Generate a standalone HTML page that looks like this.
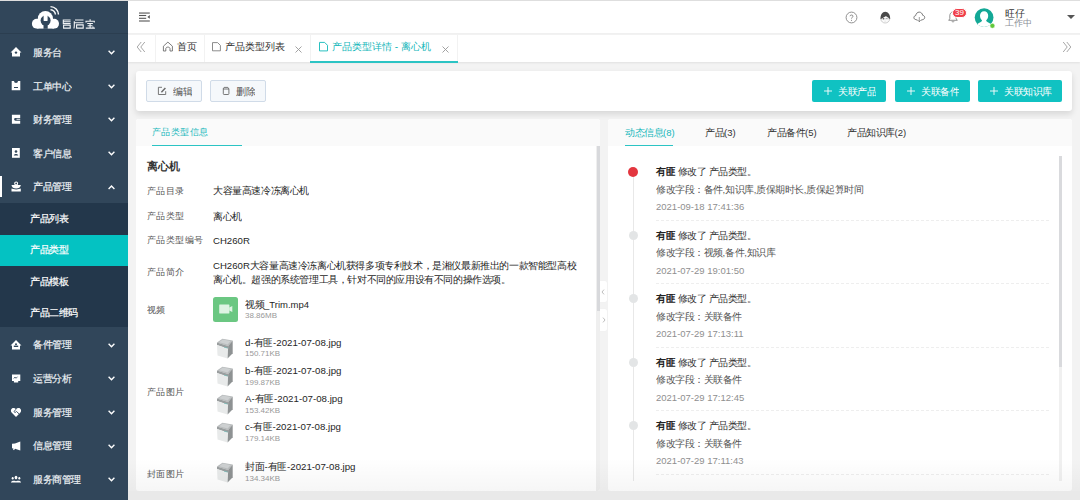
<!DOCTYPE html>
<html><head><meta charset="utf-8">
<style>
*{box-sizing:border-box;margin:0;padding:0}
html,body{width:1080px;height:500px;overflow:hidden}
body{position:relative;background:#f3f3f3;font-family:"Liberation Sans",sans-serif;color:#333;font-size:10px}
.a{position:absolute}
.t{position:absolute;white-space:nowrap;font-size:10px;line-height:12px}
.s{transform:scale(0.95);transform-origin:0 0}
.mt{position:absolute;left:33px;color:#eef2f5;font-size:10px;line-height:12px;white-space:nowrap;-webkit-text-stroke:0.2px #eef2f5;transform:scale(0.95);transform-origin:0 0}
.ch{position:absolute;left:108px;width:7px;height:5px}
.st{position:absolute;left:30px;color:#fff;font-size:10px;line-height:12px;white-space:nowrap;-webkit-text-stroke:0.2px #fff;transform:scale(0.95);transform-origin:0 0}
.lbl{position:absolute;left:147px;font-size:10px;line-height:12px;color:#555;white-space:nowrap;transform:scale(0.94);transform-origin:0 0}
.val{position:absolute;left:213px;font-size:10px;line-height:12px;color:#262626;white-space:nowrap;transform:scale(0.96);transform-origin:0 0}
.fn{position:absolute;left:245px;font-size:10px;line-height:12px;color:#262626;white-space:nowrap;transform:scale(0.95);transform-origin:0 0}
.fs{position:absolute;left:245px;font-size:8px;line-height:10px;color:#999;white-space:nowrap}
.img{position:absolute;left:215px;width:20px;height:21px}
.tl{position:absolute;left:656px;font-size:10px;line-height:12px;white-space:nowrap;transform:scale(0.95);transform-origin:0 0}
.tl b{font-weight:bold;color:#222}
.dash{position:absolute;left:656px;width:393px;height:0;border-top:1px dashed #eeeeee}
.dot{position:absolute;left:629px;width:9px;height:9px;border-radius:50%;background:#e3e5e6}
.tb{position:absolute;top:80px;height:22px;background:#10c2c2;border-radius:2px}
</style></head><body>
<!-- sidebar -->
<div id="side" class="a" style="left:0;top:0;width:128px;height:500px;background:#31465a">
  <div class="a" style="left:0;top:33px;width:128px;height:1px;background:#2b3e50"></div>
  <!-- logo -->
  <svg class="a" style="left:0;top:0" width="128" height="34" viewBox="0 0 128 34">
    <g fill="#fff"><circle cx="45.4" cy="18.6" r="7.6"/><circle cx="36.8" cy="23.7" r="4.9"/><circle cx="54.1" cy="23.7" r="4.9"/><rect x="36.8" y="20" width="17.3" height="8.6"/></g>
    <circle cx="45.6" cy="20.6" r="5" fill="#31465a"/><rect x="43.5" y="24" width="4.2" height="4.8" fill="#31465a"/><rect x="43.6" y="14.5" width="4" height="6.4" rx="0.4" fill="#fff"/>
    <path d="M50.5 6.6 A8 8 0 0 1 58.5 14.6" stroke="#fff" stroke-width="1.4" fill="none"/>
    <path d="M50.5 9.7 A4.9 4.9 0 0 1 55.4 14.6" stroke="#fff" stroke-width="1.4" fill="none"/>
    <g stroke="#f2f4f6" stroke-width="1.1" fill="none">
      <path d="M63.3 19.4 L63.3 24.2 M63 20 L70.6 20 M63 21.8 L70.6 21.8 M63 23.6 L70.6 23.6 M63.6 25.2 L70.2 25.2 L70.2 28.1 L63.6 28.1 Z"/>
      <path d="M75 20 L83.5 20 M74.3 21.2 L74.3 25.5 Q74.3 27.5 73.8 28.6 M74.5 22.8 L83.5 22.8 M76.6 24.9 L83.2 24.9 L83.2 28.1 L76.6 28.1 Z"/>
      <path d="M90.1 19.2 L90.1 20.8 M86 22.6 L86 21.2 L94.3 21.2 L94.3 22.6 M87.2 23.5 L92.9 23.5 M87.6 25.7 L92.5 25.7 M85.8 28.1 L94.9 28.1 M90.1 23.5 L90.1 28.1 M92.6 26.6 L93.4 27.3"/>
    </g>
  </svg>

  <svg class="a" style="left:10px;top:46px" width="12" height="12" viewBox="0 0 12 12"><path d="M6 1 L11.5 6.6 L10 6.6 L10 10.5 L2 10.5 L2 6.6 L0.5 6.6 Z" fill="#fff"/><circle cx="6" cy="6.6" r="1.2" fill="#31465a"/></svg>
  <div class="mt" style="top:47px">服务台</div>
  <svg class="ch" style="top:50px" viewBox="0 0 7 5"><path d="M0.6 0.8 L3.5 3.8 L6.4 0.8" stroke="#fff" stroke-width="1.35" fill="none"/></svg>

  <svg class="a" style="left:11px;top:80px" width="10" height="11" viewBox="0 0 10 11"><path d="M0.7 1 L3 1 A2 2 0 0 0 7 1 L9.3 1 L9.3 10.2 L0.7 10.2 Z" fill="#fff"/><rect x="3" y="7" width="4" height="1" fill="#31465a"/></svg>
  <div class="mt" style="top:80.5px">工单中心</div>
  <svg class="ch" style="top:84px" viewBox="0 0 7 5"><path d="M0.6 0.8 L3.5 3.8 L6.4 0.8" stroke="#fff" stroke-width="1.35" fill="none"/></svg>

  <svg class="a" style="left:11px;top:114px" width="10" height="11" viewBox="0 0 10 11"><path d="M0.9 0.8 L9.2 0.8 L9.2 3.9 L4.5 3.9 A1.4 1.4 0 0 0 4.5 6.7 L9.2 6.7 L9.2 9.8 L0.9 9.8 Z" fill="#fff"/><rect x="5.5" y="4.7" width="3.7" height="1.2" fill="#fff" opacity="0.8"/></svg>
  <div class="mt" style="top:114px">财务管理</div>
  <svg class="ch" style="top:117px" viewBox="0 0 7 5"><path d="M0.6 0.8 L3.5 3.8 L6.4 0.8" stroke="#fff" stroke-width="1.35" fill="none"/></svg>

  <svg class="a" style="left:11px;top:147px" width="10" height="11" viewBox="0 0 10 11"><rect x="1" y="1" width="7.8" height="9.8" fill="#fff"/><circle cx="5" cy="4.5" r="1.3" fill="#31465a"/><path d="M2.8 8.5 C2.8 6.5 7.2 6.5 7.2 8.5 Z" fill="#31465a"/></svg>
  <div class="mt" style="top:147.5px">客户信息</div>
  <svg class="ch" style="top:151px" viewBox="0 0 7 5"><path d="M0.6 0.8 L3.5 3.8 L6.4 0.8" stroke="#fff" stroke-width="1.35" fill="none"/></svg>

  <div class="a" style="left:0;top:176px;width:1.5px;height:21px;background:#fff"></div>
  <svg class="a" style="left:11px;top:181px" width="11" height="11" viewBox="0 0 11 11"><circle cx="5.15" cy="2.4" r="1.45" stroke="#fff" stroke-width="1.1" fill="none"/><path d="M0.5 3.9 L9.8 3.9 C9.6 6.3 7.6 7.4 5.15 7.4 C2.7 7.4 0.7 6.3 0.5 3.9 Z" fill="#fff"/><path d="M0.5 7.6 C2 8.7 8.3 8.7 9.8 7.6 L9.8 10.6 L0.5 10.6 Z" fill="#fff"/></svg>
  <div class="mt" style="top:181.3px">产品管理</div>
  <svg class="ch" style="top:185px" viewBox="0 0 7 5"><path d="M0.6 4 L3.5 1 L6.4 4" stroke="#fff" stroke-width="1.35" fill="none"/></svg>

  <div class="a" style="left:0;top:203px;width:128px;height:124px;background:#23374b"></div>
  <div class="a" style="left:0;top:235px;width:128px;height:31px;background:#04c2c2"></div>
  <div class="st" style="top:213px">产品列表</div>
  <div class="st" style="top:244px">产品类型</div>
  <div class="st" style="top:275.5px">产品模板</div>
  <div class="st" style="top:307px">产品二维码</div>

  <svg class="a" style="left:10px;top:339px" width="12" height="12" viewBox="0 0 12 12"><path d="M6 1 L11.5 6.6 L10 6.6 L10 10.5 L2 10.5 L2 6.6 L0.5 6.6 Z" fill="#fff"/><circle cx="6" cy="5.2" r="1" fill="#31465a"/><rect x="3.8" y="6.6" width="4.4" height="1.4" fill="#31465a"/></svg>
  <div class="mt" style="top:339.4px">备件管理</div>
  <svg class="ch" style="top:343px" viewBox="0 0 7 5"><path d="M0.6 0.8 L3.5 3.8 L6.4 0.8" stroke="#fff" stroke-width="1.35" fill="none"/></svg>

  <svg class="a" style="left:11px;top:373px" width="10" height="11" viewBox="0 0 10 11"><path d="M1 1.5 L9.3 1.5 L9.3 8 L7.2 8 L7.2 9.6 L2.9 9.6 L2.9 8 L1 8 Z" fill="#fff"/><path d="M2.8 5.5 L4 4 L5 5.3 L6.5 3.7" stroke="#31465a" stroke-width="0.8" fill="none"/></svg>
  <div class="mt" style="top:373px">运营分析</div>
  <svg class="ch" style="top:376px" viewBox="0 0 7 5"><path d="M0.6 0.8 L3.5 3.8 L6.4 0.8" stroke="#fff" stroke-width="1.35" fill="none"/></svg>

  <svg class="a" style="left:10px;top:407px" width="12" height="11" viewBox="0 0 12 11"><path d="M6 10 L1.8 5.8 C0.5 4.5 0.6 2.2 2.2 1.3 C3.5 0.6 5 1 6 2.2 C7 1 8.5 0.6 9.8 1.3 C11.4 2.2 11.5 4.5 10.2 5.8 Z" fill="#fff"/><path d="M6 2.2 L4.3 4.3 C4 5 4.8 5.8 5.5 5.3 L6.5 4.5 L9 6.8" stroke="#31465a" stroke-width="0.9" fill="none"/></svg>
  <div class="mt" style="top:406.6px">服务管理</div>
  <svg class="ch" style="top:410px" viewBox="0 0 7 5"><path d="M0.6 0.8 L3.5 3.8 L6.4 0.8" stroke="#fff" stroke-width="1.35" fill="none"/></svg>

  <svg class="a" style="left:11px;top:441px" width="10" height="10" viewBox="0 0 10 10"><path d="M1 2.7 L4 2.5 L9.3 0.5 L9.3 9.5 L4 7.8 L3 9.3 L2 8.5 L2.5 7.5 L1 7.3 Z" fill="#fff"/></svg>
  <div class="mt" style="top:440.2px">信息管理</div>
  <svg class="ch" style="top:444px" viewBox="0 0 7 5"><path d="M0.6 0.8 L3.5 3.8 L6.4 0.8" stroke="#fff" stroke-width="1.35" fill="none"/></svg>

  <svg class="a" style="left:10px;top:475px" width="12" height="9" viewBox="0 0 12 9"><ellipse cx="6" cy="2.6" rx="1.4" ry="1.8" fill="#fff"/><ellipse cx="2.7" cy="3.2" rx="1" ry="1.3" fill="#fff"/><ellipse cx="9.3" cy="3.2" rx="1" ry="1.3" fill="#fff"/><path d="M1 7 C2 5.6 4 5.6 6 6.2 C8 5.6 10 5.6 11 7 L11 7.5 L1 7.5 Z" fill="#fff"/></svg>
  <div class="mt" style="top:473.8px">服务商管理</div>
  <svg class="ch" style="top:477px" viewBox="0 0 7 5"><path d="M0.6 0.8 L3.5 3.8 L6.4 0.8" stroke="#fff" stroke-width="1.35" fill="none"/></svg>
</div>
<div class="a" style="left:0;top:0;width:1080px;height:1px;background:#dedede"></div>
<!-- header -->
<div class="a" style="left:128px;top:1px;width:952px;height:33px;background:#fff;border-bottom:1px solid #f0f0f0"></div>
<svg class="a" style="left:139px;top:12px" width="12" height="10" viewBox="0 0 12 10"><rect x="0" y="0.5" width="10.8" height="1.1" fill="#555"/><rect x="0" y="2.95" width="7.2" height="1.1" fill="#555"/><rect x="0" y="5.75" width="7.2" height="1.1" fill="#555"/><rect x="0" y="8.45" width="10.8" height="1.1" fill="#555"/><path d="M10.8 3 L8.4 4.9 L10.8 6.8 Z" fill="#555"/></svg>

<svg class="a" style="left:845px;top:11px" width="13" height="13" viewBox="0 0 13 13"><circle cx="6.5" cy="6.5" r="5.4" stroke="#777" stroke-width="0.8" fill="none"/><path d="M5 5.2 C5 3.6 8 3.6 8 5.2 C8 6.3 6.5 6.3 6.5 7.6" stroke="#777" stroke-width="0.85" fill="none"/><circle cx="6.5" cy="9.2" r="0.55" fill="#777"/></svg>
<svg class="a" style="left:876px;top:8px" width="20" height="18" viewBox="0 0 20 18"><path d="M4.8 10.8 C5 13.6 7 15 9.2 15 C11.4 15 13.5 13.6 13.8 10.8 Z" fill="#fafafa" stroke="#b0b0b0" stroke-width="0.6"/><path d="M9.2 3.7 C12.2 3.7 14.3 6.6 14.2 10.9 L13.7 11 C12.6 9.6 10.8 8.6 9.6 8.3 C8 9.3 6.3 10.1 4.9 11 L4.5 10.9 C4.4 6.6 6.4 3.7 9.2 3.7 Z" fill="#4a4a4a"/><circle cx="7.5" cy="10.7" r="0.75" fill="#555"/><path d="M10.2 10.5 L11.5 10.2" stroke="#777" stroke-width="0.6"/><path d="M8.6 13.2 L9.6 13.2" stroke="#bbb" stroke-width="0.5"/></svg>
<svg class="a" style="left:912px;top:10px" width="14" height="13" viewBox="0 0 14 13"><path d="M5.6 10.2 L3.8 9.6 C2.6 9.4 1.9 8.6 1.9 7.6 C1.9 6.5 2.7 5.7 3.7 5.6 C4 3.6 5.4 2.1 7.2 2.1 C9 2.1 10.4 3.5 10.7 5.3 C11.9 5.4 12.7 6.4 12.7 7.5 C12.7 8.6 11.9 9.4 10.8 9.6 L9 10.2" stroke="#5a5a5a" stroke-width="0.8" fill="none"/><path d="M7.3 7 L7.3 11.5" stroke="#777" stroke-width="0.7"/><path d="M6 10.3 L7.3 11.7 L8.6 10.3" stroke="#555" stroke-width="0.8" fill="none"/></svg>
<svg class="a" style="left:948px;top:11px" width="10" height="12" viewBox="0 0 10 12"><path d="M5 1 C2.8 1 1.8 2.8 1.8 5 L1.8 7.8 L0.7 9.3 L9.3 9.3 L8.2 7.8 L8.2 5 C8.2 2.8 7.2 1 5 1 Z" stroke="#777" stroke-width="0.8" fill="none"/><path d="M3.8 10.2 C4 11.2 6 11.2 6.2 10.2" stroke="#777" stroke-width="0.8" fill="none"/></svg>
<div class="a" style="left:952.3px;top:7.7px;width:14.4px;height:10.6px;border-radius:5.3px;background:#f03f4a;border:0.8px solid #fff"></div>
<div class="t" style="left:952.3px;top:8px;width:14.4px;text-align:center;font-size:8px;line-height:10px;color:#fff">39</div>
<svg class="a" style="left:974px;top:7px" width="22" height="22" viewBox="0 0 22 22"><defs><clipPath id="avc"><circle cx="10.1" cy="10.6" r="9.4"/></clipPath></defs><circle cx="10.1" cy="10.6" r="9.4" fill="#13a896"/><g clip-path="url(#avc)"><path d="M10.1 4.3 C12.6 4.3 14.2 6.2 14.2 8.8 C14.2 10.8 13.3 12.4 12.1 13.4 C12.4 15 15 15.6 16.5 16.8 L17 21 L3.2 21 L3.7 16.8 C5.2 15.6 7.8 15 8.1 13.4 C6.9 12.4 6 10.8 6 8.8 C6 6.2 7.6 4.3 10.1 4.3 Z" fill="#fff"/></g><circle cx="18.4" cy="18.8" r="2.5" fill="#62c83b" stroke="#fff" stroke-width="0.6"/></svg>
<div class="t" style="left:1005px;top:7.5px;color:#333">旺仔</div>
<div class="t" style="left:1005px;top:18px;font-size:9px;line-height:11px;color:#8a8e96">工作中</div>
<svg class="a" style="left:1067px;top:15px" width="8" height="4" viewBox="0 0 8 4"><path d="M0 0 L8 0 L4 4 Z" fill="#555"/></svg>

<!-- tabs bar -->
<div class="a" style="left:128px;top:35px;width:952px;height:27px;background:#fff;box-shadow:0 1px 2px rgba(0,0,0,0.08)"></div>
<svg class="a" style="left:136px;top:41px" width="10" height="12" viewBox="0 0 10 12"><path d="M5.2 1 L1.2 6 L5.2 11 M8.8 1 L4.8 6 L8.8 11" stroke="#8a8a8a" stroke-width="0.75" fill="none"/></svg>
<div class="a" style="left:155px;top:35px;width:1px;height:27px;background:#f2f2f2"></div>
<svg class="a" style="left:162px;top:41px" width="12" height="11" viewBox="0 0 12 11"><path d="M1.4 10 L1.4 5.2 L5.9 1.1 L10.4 5.2 L10.4 10 L8 10 L8 7.6 C8 5.6 3.8 5.6 3.8 7.6 L3.8 10 Z" stroke="#666" stroke-width="0.85" fill="none" stroke-linejoin="round"/></svg>
<div class="t" style="left:177px;top:41px">首页</div>
<div class="a" style="left:204px;top:35px;width:1px;height:27px;background:#f2f2f2"></div>
<svg class="a" style="left:211px;top:41px" width="11" height="11" viewBox="0 0 11 11"><path d="M1.5 1.6 L6.6 1.6 L9.4 4.4 L9.4 9.8 L1.5 9.8 Z" stroke="#777" stroke-width="0.85" fill="none" stroke-linejoin="round"/></svg>
<div class="t" style="left:225px;top:41px">产品类型列表</div>
<svg class="a" style="left:295px;top:46px" width="7" height="7" viewBox="0 0 7 7"><path d="M0.5 0.5 L6.5 6.5 M6.5 0.5 L0.5 6.5" stroke="#999" stroke-width="0.9"/></svg>
<div class="a" style="left:310px;top:35px;width:1px;height:27px;background:#f2f2f2"></div>
<div class="a" style="left:457px;top:35px;width:1px;height:27px;background:#f2f2f2"></div>
<div class="a" style="left:310px;top:61px;width:148px;height:1.5px;background:#2cc4c4"></div>
<svg class="a" style="left:318px;top:41px" width="11" height="11" viewBox="0 0 11 11"><path d="M1.5 1.4 L6.6 1.4 L9.5 4.3 L9.5 9.9 L1.5 9.9 Z" stroke="#1dbdbd" stroke-width="0.95" fill="none" stroke-linejoin="round"/></svg>
<div class="t" style="left:332px;top:41px;color:#15b7ba">产品类型详情 - 离心机</div>
<svg class="a" style="left:442px;top:46px" width="7" height="7" viewBox="0 0 7 7"><path d="M0.5 0.5 L6.5 6.5 M6.5 0.5 L0.5 6.5" stroke="#999" stroke-width="0.9"/></svg>
<svg class="a" style="left:1062px;top:41px" width="10" height="12" viewBox="0 0 10 12"><path d="M1.2 1 L5.2 6 L1.2 11 M4.8 1 L8.8 6 L4.8 11" stroke="#8a8a8a" stroke-width="0.75" fill="none"/></svg>

<!-- toolbar -->
<div class="a" style="left:136px;top:71px;width:936px;height:40px;background:#fff;border-radius:3px;box-shadow:0 3px 6px rgba(0,0,0,0.12)"></div>
<div class="a" style="left:146px;top:80px;width:56px;height:22px;border:1px solid #d0dbe8;background:#f5f8fb;border-radius:2px"></div>
<svg class="a" style="left:157px;top:86px" width="10" height="10" viewBox="0 0 10 10"><path d="M5 1.3 L1.4 1.3 L1.4 8.5 L8.7 8.5 L8.7 5.2" stroke="#6a6a6a" stroke-width="0.9" fill="none"/><path d="M4.4 6.2 L8.4 2.1" stroke="#6a6a6a" stroke-width="1.5"/></svg>
<div class="t s" style="left:173px;top:86px;color:#555">编辑</div>
<div class="a" style="left:210px;top:80px;width:56px;height:22px;border:1px solid #d0dbe8;background:#f5f8fb;border-radius:2px"></div>
<svg class="a" style="left:222px;top:86px" width="9" height="10" viewBox="0 0 9 10"><path d="M2.1 1.4 L5.9 1.4 L7 3 L1 3 Z" stroke="#6a6a6a" stroke-width="0.9" fill="none" stroke-linejoin="round"/><path d="M1.3 3 L1.3 7.7 Q1.3 8.5 2.1 8.5 L6.1 8.5 Q6.9 8.5 6.9 7.7 L6.9 3" stroke="#6a6a6a" stroke-width="0.9" fill="none"/></svg>
<div class="t s" style="left:236px;top:86px;color:#555">删除</div>

<div class="tb" style="left:812px;width:74px"></div>
<svg class="a" style="left:824px;top:87px" width="8" height="8" viewBox="0 0 8 8"><path d="M4 0 L4 8 M0 4 L8 4" stroke="#fff" stroke-width="0.9"/></svg>
<div class="t s" style="left:838px;top:86px;color:#fff">关联产品</div>
<div class="tb" style="left:895px;width:75px"></div>
<svg class="a" style="left:907px;top:87px" width="8" height="8" viewBox="0 0 8 8"><path d="M4 0 L4 8 M0 4 L8 4" stroke="#fff" stroke-width="0.9"/></svg>
<div class="t s" style="left:921px;top:86px;color:#fff">关联备件</div>
<div class="tb" style="left:978px;width:84px"></div>
<svg class="a" style="left:990px;top:87px" width="8" height="8" viewBox="0 0 8 8"><path d="M4 0 L4 8 M0 4 L8 4" stroke="#fff" stroke-width="0.9"/></svg>
<div class="t s" style="left:1004px;top:86px;color:#fff">关联知识库</div>
<!-- left panel -->
<div class="a" style="left:136px;top:119px;width:464px;height:372px;background:#fff;border-radius:3px;overflow:hidden">
  <div class="a" style="left:0;top:0;width:464px;height:27px;background:#fafafa"></div>
  <div class="a" style="left:460px;top:27px;width:4px;height:345px;background:#efefef"></div>
  <div class="a" style="left:461px;top:27px;width:3px;height:165px;background:#d8d9dc"></div>
</div>
<div class="t" style="left:152px;top:127px;color:#15b7ba;transform:scale(0.94);transform-origin:0 0">产品类型信息</div>
<div class="a" style="left:152px;top:145px;width:90px;height:1px;background:#2cc4c4"></div>

<div class="a" style="left:147px;top:160px;font-size:11px;line-height:13px;font-weight:bold;color:#333;white-space:nowrap">离心机</div>
<div class="lbl" style="top:185.5px">产品目录</div><div class="val" style="top:184.5px">大容量高速冷冻离心机</div>
<div class="lbl" style="top:211px">产品类型</div><div class="val" style="top:211px">离心机</div>
<div class="lbl" style="top:235px">产品类型编号</div><div class="val" style="top:235px">CH260R</div>
<div class="lbl" style="top:266.5px">产品简介</div>
<div class="val" style="top:257.7px;line-height:15px">CH260R大容量高速冷冻离心机获得多项专利技术，是湘仪最新推出的一款智能型高校<br>离心机。超强的系统管理工具，针对不同的应用设有不同的操作选项。</div>
<div class="lbl" style="top:304.5px">视频</div>
<div class="a" style="left:213px;top:297px;width:25px;height:25px;background:#6bc782;border-radius:2.5px"></div>
<svg class="a" style="left:213px;top:297px" width="25" height="25" viewBox="0 0 25 25"><rect x="6.2" y="7.6" width="10.2" height="8.8" rx="0.4" fill="#def3e3"/><path d="M16.2 10.5 L19.3 9 L19.3 15 L16.2 13.5 Z" fill="#def3e3"/></svg>
<div class="fn" style="top:299px">视频_Trim.mp4</div>
<div class="fs" style="top:311px">38.86MB</div>

<div class="lbl" style="top:387px">产品图片</div>
<div class="lbl" style="top:469px">封面图片</div>


<svg class="a" style="left:212px;top:334px" width="26" height="28" viewBox="0 0 26 28"><polygon points="5,8.4 10.4,4.8 20.7,6.4 16.2,12" fill="#b8bbbc"/>
<polygon points="7,8.2 10.8,5.6 18.8,6.9 15.6,10.6" fill="#cdd0d1"/>
<polygon points="5,8.4 16.2,12 16.1,14.8 5,11" fill="#9a9e9f"/>
<polygon points="5,11 16.1,14.8 15.6,24.4 5.5,21.4" fill="#e8eaea"/>
<polygon points="16.2,12 20.7,6.4 20.7,19.3 15.6,24.4" fill="#8e9293"/>
<polygon points="12,12.7 15.6,13.8 15.6,14.6 12,13.5" fill="#79bdb9"/></svg>
<div class="fn" style="top:337px;transform:scale(0.97)">d-有匪-2021-07-08.jpg</div>
<div class="fs" style="top:349px">150.71KB</div>
<svg class="a" style="left:212px;top:362px" width="26" height="28" viewBox="0 0 26 28"><polygon points="5,8.4 10.4,4.8 20.7,6.4 16.2,12" fill="#b8bbbc"/>
<polygon points="7,8.2 10.8,5.6 18.8,6.9 15.6,10.6" fill="#cdd0d1"/>
<polygon points="5,8.4 16.2,12 16.1,14.8 5,11" fill="#9a9e9f"/>
<polygon points="5,11 16.1,14.8 15.6,24.4 5.5,21.4" fill="#e8eaea"/>
<polygon points="16.2,12 20.7,6.4 20.7,19.3 15.6,24.4" fill="#8e9293"/>
<polygon points="12,12.7 15.6,13.8 15.6,14.6 12,13.5" fill="#79bdb9"/></svg>
<div class="fn" style="top:365px;transform:scale(0.97)">b-有匪-2021-07-08.jpg</div>
<div class="fs" style="top:378px">199.87KB</div>
<svg class="a" style="left:212px;top:390px" width="26" height="28" viewBox="0 0 26 28"><polygon points="5,8.4 10.4,4.8 20.7,6.4 16.2,12" fill="#b8bbbc"/>
<polygon points="7,8.2 10.8,5.6 18.8,6.9 15.6,10.6" fill="#cdd0d1"/>
<polygon points="5,8.4 16.2,12 16.1,14.8 5,11" fill="#9a9e9f"/>
<polygon points="5,11 16.1,14.8 15.6,24.4 5.5,21.4" fill="#e8eaea"/>
<polygon points="16.2,12 20.7,6.4 20.7,19.3 15.6,24.4" fill="#8e9293"/>
<polygon points="12,12.7 15.6,13.8 15.6,14.6 12,13.5" fill="#79bdb9"/></svg>
<div class="fn" style="top:393px;transform:scale(0.97)">A-有匪-2021-07-08.jpg</div>
<div class="fs" style="top:406px">153.42KB</div>
<svg class="a" style="left:212px;top:418px" width="26" height="28" viewBox="0 0 26 28"><polygon points="5,8.4 10.4,4.8 20.7,6.4 16.2,12" fill="#b8bbbc"/>
<polygon points="7,8.2 10.8,5.6 18.8,6.9 15.6,10.6" fill="#cdd0d1"/>
<polygon points="5,8.4 16.2,12 16.1,14.8 5,11" fill="#9a9e9f"/>
<polygon points="5,11 16.1,14.8 15.6,24.4 5.5,21.4" fill="#e8eaea"/>
<polygon points="16.2,12 20.7,6.4 20.7,19.3 15.6,24.4" fill="#8e9293"/>
<polygon points="12,12.7 15.6,13.8 15.6,14.6 12,13.5" fill="#79bdb9"/></svg>
<div class="fn" style="top:421px;transform:scale(0.97)">c-有匪-2021-07-08.jpg</div>
<div class="fs" style="top:434px">179.14KB</div>
<div class="a" style="left:211px;top:458px;width:27px;height:33px;background:#fff"></div>
<svg class="a" style="left:212px;top:458px" width="26" height="28" viewBox="0 0 26 28"><polygon points="5,8.4 10.4,4.8 20.7,6.4 16.2,12" fill="#b8bbbc"/>
<polygon points="7,8.2 10.8,5.6 18.8,6.9 15.6,10.6" fill="#cdd0d1"/>
<polygon points="5,8.4 16.2,12 16.1,14.8 5,11" fill="#9a9e9f"/>
<polygon points="5,11 16.1,14.8 15.6,24.4 5.5,21.4" fill="#e8eaea"/>
<polygon points="16.2,12 20.7,6.4 20.7,19.3 15.6,24.4" fill="#8e9293"/>
<polygon points="12,12.7 15.6,13.8 15.6,14.6 12,13.5" fill="#79bdb9"/></svg>
<div class="fn" style="top:461px;transform:scale(0.97)">封面-有匪-2021-07-08.jpg</div>
<div class="fs" style="top:474px">134.34KB</div>

<!-- collapse buttons -->
<div class="a" style="left:600px;top:280.5px;width:7px;height:21.5px;background:#fff;border-radius:0 2px 2px 0;box-shadow:0 0 1px rgba(0,0,0,0.06)"></div>
<svg class="a" style="left:601px;top:289px" width="4" height="6" viewBox="0 0 4 6"><path d="M3 0.6 L1 3 L3 5.4" stroke="#a8a8a8" stroke-width="0.75" fill="none"/></svg>
<div class="a" style="left:600px;top:308.5px;width:7px;height:22.5px;background:#fff;border-radius:0 2px 2px 0;box-shadow:0 0 1px rgba(0,0,0,0.06)"></div>
<svg class="a" style="left:602px;top:317px" width="4" height="6" viewBox="0 0 4 6"><path d="M1 0.6 L3 3 L1 5.4" stroke="#a8a8a8" stroke-width="0.75" fill="none"/></svg>

<!-- right panel -->
<div class="a" style="left:608px;top:119px;width:464px;height:372px;background:#fff;border-radius:3px;overflow:hidden">
  <div class="a" style="left:0;top:0;width:464px;height:27px;background:#fafafa"></div>
  <div class="a" style="left:451px;top:37px;width:3px;height:325px;background:#f0f0f0"></div>
  <div class="a" style="left:451px;top:37px;width:3px;height:211px;background:#d9dadd"></div>
</div>
<div class="t" style="left:625px;top:127px;color:#15b7ba;transform:scale(0.95);transform-origin:0 0">动态信息(8)</div>
<div class="a" style="left:625px;top:145px;width:48px;height:1px;background:#2cc4c4"></div>
<div class="t s" style="left:705px;top:127px">产品(3)</div>
<div class="t s" style="left:767px;top:127px">产品备件(5)</div>
<div class="t s" style="left:847px;top:127px">产品知识库(2)</div>

<div class="a" style="left:633px;top:172px;width:1px;height:309px;background:#e8e8e8"></div>
<div class="a" style="left:628px;top:167px;width:10px;height:10px;border-radius:50%;background:#e3363f"></div>
<div class="tl" style="top:166px;color:#333"><b>有匪</b> 修改了 产品类型。</div>
<div class="tl" style="top:183.5px;color:#555">修改字段：备件,知识库,质保期时长,质保起算时间</div>
<div class="tl" style="top:201px;color:#8f8f8f">2021-09-18 17:41:36</div>
<div class="dash" style="top:220px"></div>

<div class="dot" style="top:230.5px"></div>
<div class="tl" style="top:229.5px;color:#333"><b>有匪</b> 修改了 产品类型。</div>
<div class="tl" style="top:247px;color:#555">修改字段：视频,备件,知识库</div>
<div class="tl" style="top:264.5px;color:#8f8f8f">2021-07-29 19:01:50</div>
<div class="dash" style="top:283px"></div>

<div class="dot" style="top:294px"></div>
<div class="tl" style="top:293px;color:#333"><b>有匪</b> 修改了 产品类型。</div>
<div class="tl" style="top:310.5px;color:#555">修改字段：关联备件</div>
<div class="tl" style="top:328px;color:#8f8f8f">2021-07-29 17:13:11</div>
<div class="dash" style="top:346.5px"></div>

<div class="dot" style="top:357.5px"></div>
<div class="tl" style="top:356.5px;color:#333"><b>有匪</b> 修改了 产品类型。</div>
<div class="tl" style="top:374px;color:#555">修改字段：关联备件</div>
<div class="tl" style="top:391.5px;color:#8f8f8f">2021-07-29 17:12:45</div>
<div class="dash" style="top:410px"></div>

<div class="dot" style="top:421px"></div>
<div class="tl" style="top:420px;color:#333"><b>有匪</b> 修改了 产品类型。</div>
<div class="tl" style="top:437.5px;color:#555">修改字段：关联备件</div>
<div class="tl" style="top:455px;color:#8f8f8f">2021-07-29 17:11:43</div>
<div class="dash" style="top:473.5px"></div>

<!-- bottom fade -->
<div class="a" style="left:128px;top:458px;width:952px;height:33px;background:linear-gradient(rgba(0,0,0,0),rgba(0,0,0,0.035))"></div>
<div class="a" style="left:128px;top:491px;width:952px;height:9px;background:#e9e9e9"></div>
</body></html>
